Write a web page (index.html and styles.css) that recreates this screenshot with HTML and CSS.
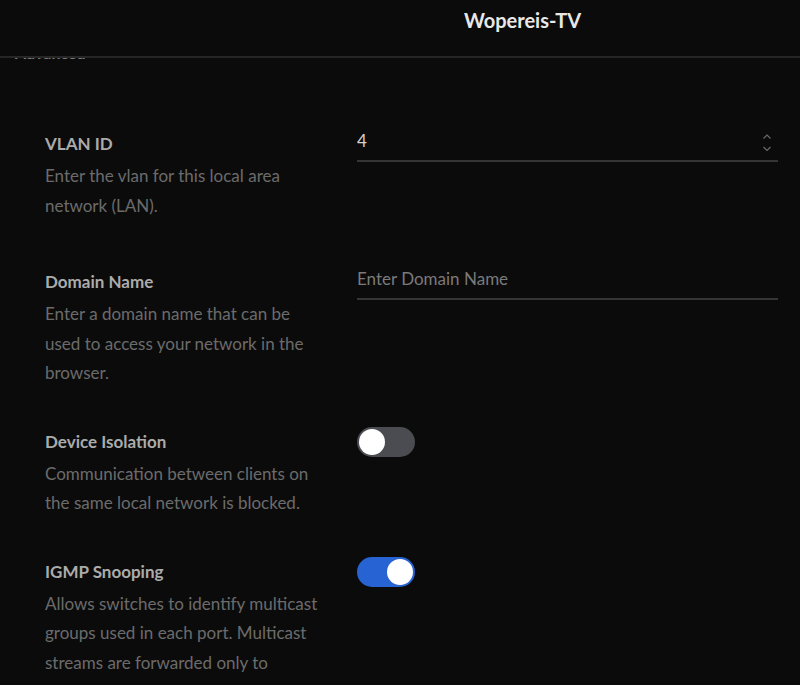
FILE: index.html
```html
<!DOCTYPE html>
<html lang="en">
<head>
  <meta charset="UTF-8" />
  <meta name="viewport" content="width=device-width, initial-scale=1.0" />
  <title>Wopereis-TV</title>
  <link rel="stylesheet" href="styles.css">
</head>
<body>
  <div class="top-bar">
    <div class="page-title">Wopereis-TV</div>
  </div>

  <div class="content">
    <div class="section-title">Advanced</div>

    <div class="settings">
      <div class="setting-row first">
        <div class="setting-text">
          <div class="setting-label">VLAN ID</div>
          <div class="setting-desc">Enter the vlan for this local area network (LAN).</div>
        </div>
        <div class="setting-control">
          <div class="field">
            <input type="text" value="4">
            <svg class="spinner" width="12" height="20" viewBox="0 0 12 20">
              <path d="M2.5 5.5 L6 2 L9.5 5.5" fill="none" stroke="#6a6a6a" stroke-width="1.2" />
              <path d="M2.5 14 L6 17.5 L9.5 14" fill="none" stroke="#6a6a6a" stroke-width="1.2" />
            </svg>
          </div>
        </div>
      </div>

      <div class="setting-row">
        <div class="setting-text">
          <div class="setting-label">Domain Name</div>
          <div class="setting-desc">Enter a domain name that can be used to access your network in the browser.</div>
        </div>
        <div class="setting-control">
          <div class="field">
            <input type="text" placeholder="Enter Domain Name">
          </div>
        </div>
      </div>

      <div class="setting-row">
        <div class="setting-text">
          <div class="setting-label">Device Isolation</div>
          <div class="setting-desc">Communication between clients on the same local network is blocked.</div>
        </div>
        <div class="setting-control">
          <div class="toggle"><div class="knob"></div></div>
        </div>
      </div>

      <div class="setting-row">
        <div class="setting-text">
          <div class="setting-label">IGMP Snooping</div>
          <div class="setting-desc">Allows switches to identify multicast groups used in each port. Multicast streams are forwarded only to clients that requested them.</div>
        </div>
        <div class="setting-control">
          <div class="toggle on"><div class="knob"></div></div>
        </div>
      </div>
    </div>
  </div>
</body>
</html>
```

FILE: styles.css
```css
html, body {
  overflow: hidden;
  height: 100%;
}
body {
  margin: 0;
  font-family: Lato, "Open Sans", sans-serif;
  background: #0b0b0b;
  color: #a9a9a9;
}
.top-bar {
  position: fixed;
  top: 0;
  left: 0;
  right: 0;
  height: 56px;
  background: #0b0b0b;
  border-bottom: 2px solid #262626;
  padding-left: 245px;
  display: flex;
  align-items: center;
  justify-content: center;
  z-index: 10;
}
.page-title {
  font-size: 20px;
  font-weight: bold;
  color: #e8e8e8;
  margin-top: -17px;
}
.content {
  padding: 44px 22px 0 15px;
}
.section-title {
  font-size: 16px;
  font-weight: bold;
  line-height: 18px;
  color: #7a7a7a;
  margin-bottom: 72px;
}
.settings {
  padding-left: 30px;
}
.setting-row {
  display: grid;
  grid-template-columns: 274px 1fr;
  column-gap: 38px;
  margin-bottom: 44px;
}
.setting-row.first {
  margin-bottom: 52px;
}
.setting-label {
  font-size: 17px;
  font-weight: bold;
  line-height: 20px;
  color: #ababab;
  margin-bottom: 7px;
}
.setting-desc {
  font-size: 17px;
  line-height: 29.5px;
  color: #6b6b6b;
}
.field {
  display: flex;
  align-items: center;
  margin-top: -7px;
  padding-bottom: 5px;
  border-bottom: 2px solid #353535;
}
.field input {
  flex: 1;
  min-width: 0;
  height: 28px;
  padding: 0;
  border: none;
  outline: none;
  background: transparent;
  font-family: inherit;
  font-size: 17px;
  line-height: 28px;
  color: #d2d2d2;
}
.field input::placeholder {
  color: #7a7a7a;
}
.spinner {
  margin-right: 5px;
  margin-top: 4px;
}
.toggle {
  width: 58px;
  height: 30px;
  margin-top: -5px;
  border-radius: 15px;
  background: #4b4c51;
  box-sizing: border-box;
  padding: 2px;
  display: flex;
}
.toggle.on {
  background: #2863d3;
  justify-content: flex-end;
}
.knob {
  width: 26px;
  height: 26px;
  border-radius: 50%;
  background: #fff;
}
```
